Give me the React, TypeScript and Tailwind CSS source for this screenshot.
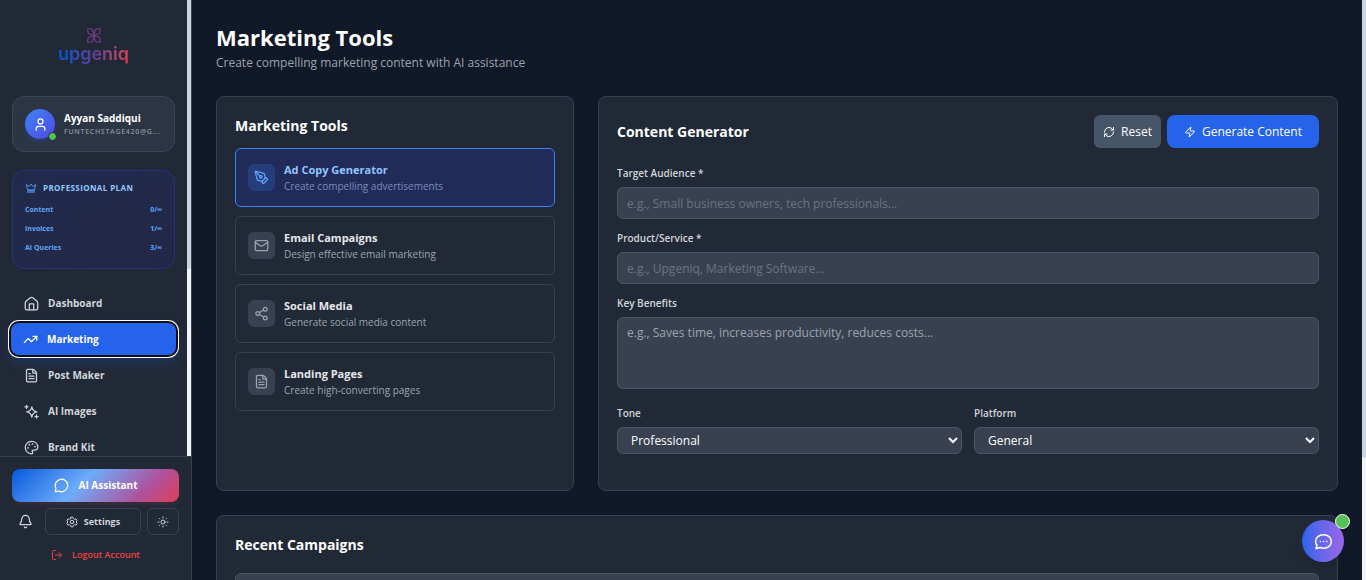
import { useState } from 'react'
import type { ReactNode } from 'react'
import {
  Bell,
  FileText,
  LogOut,
  Mail,
  MessageCircle,
  Palette,
  PenTool,
  RefreshCw,
  Share2,
  TrendingUp,
  User,
  Zap,
} from 'lucide-react'

function Icon({ className, children }: { className?: string; children: ReactNode }) {
  return (
    <svg
      viewBox="0 0 24 24"
      fill="none"
      stroke="currentColor"
      strokeWidth="2"
      strokeLinecap="round"
      strokeLinejoin="round"
      className={className}
      aria-hidden="true"
    >
      {children}
    </svg>
  )
}

function HomeIcon({ className }: { className?: string }) {
  return (
    <Icon className={className}>
      <path d="M2 11.500c0-1.800.6-2.800 2-3.900l5.500-4.500C10.500 2.300 11.200 2 12 2s1.500.3 2.500 1.100L20 7.600c1.400 1.100 2 2.100 2 3.900V19a3 3 0 0 1-3 3H5a3 3 0 0 1-3-3z" />
      <path d="M8.500 22v-9.500h7V22" />
    </Icon>
  )
}

function SparklesIcon({ className }: { className?: string }) {
  return (
    <Icon className={className}>
      <path d="M12.500 4.500c.8 5 2.500 7 8 8-5.500 1-7.200 3-8 8.500-.8-5.500-2.500-7.500-8-8.500 5.500-1 7.200-3 8-8z" />
      <path d="M4 2v5M1.500 4.500h5M20 17.500v5M17.500 20h5" />
    </Icon>
  )
}

function CrownIcon({ className }: { className?: string }) {
  return (
    <Icon className={className}>
      <path d="M5 15 2.500 5 8 9.500 12 4l4 5.500L21.500 5 19 15z" />
      <path d="M5 16h14v5H5z" fill="currentColor" opacity=".7" />
    </Icon>
  )
}

function GearIcon({ className }: { className?: string }) {
  return (
    <Icon className={className}>
      <path d="M10 2.500h4l1 2.800 2.200 1.200 3-.5 2 3.500-2 2.500 2 2.500-2 3.500-3-.5-2.200 1.200-1 2.800h-4l-1-2.800-2.200-1.200-3 .5-2-3.500 2-2.500-2-2.500 2-3.500 3 .5L9 5.300z" />
      <circle cx="12" cy="12" r="3.500" />
    </Icon>
  )
}

function SunIcon({ className }: { className?: string }) {
  return (
    <Icon className={className}>
      <circle cx="12" cy="12" r="4" />
      <path d="M12 2v2M12 20v2M2 12h2M20 12h2M5 5l.8.8M18.200 18.200l.8.8M5 19l.8-.8M18.200 5.800 19 5" />
    </Icon>
  )
}

function ChatIcon({ className }: { className?: string }) {
  return (
    <Icon className={className}>
      <path d="M12 3.500c5.500 0 10 3.700 10 8.500s-4.500 8.500-10 8.500c-1.500 0-3-.3-4.300-.8L2.500 21l1.300-4.200C2.700 15.400 2 13.800 2 12c0-4.800 4.500-8.500 10-8.500z" />
      <path d="M7.800 12h.1M12 12h.1M16.200 12h.1" />
    </Icon>
  )
}

function LogoMark() {
  return (
    <svg viewBox="0 0 28 30" className="h-[15px] w-3.5" fill="none" stroke="#753d86" strokeWidth="2.200" strokeLinejoin="round" aria-hidden="true">
      <path d="M14 15 5 12Q1.500 10.500 1.500 7V1.500H7Q12.500 2.500 12.500 8zM14 15l9-3q3.500-1.500 3.500-5V1.500H21Q15.500 2.500 15.500 8zM14 15 5 18q-3.500 1.500-3.500 5v5.500H7q5.500-1 5.500-6.500zM14 15l9 3q3.500 1.500 3.500 5v5.500H21q-5.500-1-5.500-6.500z" />
    </svg>
  )
}

const USAGE = [
  { label: 'Content', value: '0/∞' },
  { label: 'Invoices', value: '1/∞' },
  { label: 'AI Queries', value: '3/∞' },
]

const NAV = [
  { label: 'Dashboard', icon: HomeIcon },
  { label: 'Marketing', icon: TrendingUp },
  { label: 'Post Maker', icon: FileText },
  { label: 'AI Images', icon: SparklesIcon },
  { label: 'Brand Kit', icon: Palette },
]

const TOOLS = [
  { id: 'ad', title: 'Ad Copy Generator', text: 'Create compelling advertisements', icon: PenTool },
  { id: 'email', title: 'Email Campaigns', text: 'Design effective email marketing', icon: Mail },
  { id: 'social', title: 'Social Media', text: 'Generate social media content', icon: Share2 },
  { id: 'landing', title: 'Landing Pages', text: 'Create high-converting pages', icon: FileText },
]

const LABEL = 'block text-[10px] leading-4 font-semibold text-[#d1d5db]'
const FIELD =
  'block w-full rounded-md border border-[#4b5563] bg-[#394151] px-[9px] text-xs text-white focus:outline-none focus:border-[#3b82f6]'

function Sidebar() {
  return (
    <aside className="flex w-48 shrink-0 flex-col border-r border-[#374151] bg-[#212936]">
      <div className="flex min-h-0 flex-1">
        <div className="min-w-0 flex-1 overflow-hidden px-3">
          <div className="flex h-24 flex-col items-center pt-7">
            <LogoMark />
            <span className="bg-linear-to-r from-[#1053cc] from-15% via-[#5b3f9a] to-[#dc3c50] bg-clip-text font-['Inter'] text-lg leading-[22px] font-semibold text-transparent">
              upgeniq
            </span>
          </div>

          {/* Account */}
          <div className="flex h-14 items-center gap-[9px] rounded-xl border border-[#3b4452] bg-[#2c3543] px-3">
            <div className="relative flex size-[30px] shrink-0 items-center justify-center rounded-full bg-linear-to-br from-[#3b82f6] to-[#4f46e5] text-white shadow-md shadow-[#2563eb33]">
              <User className="size-[15px]" />
              <span className="absolute -right-0.5 -bottom-0.5 size-[9px] rounded-full border border-[#1f2937] bg-[#55c057]" />
            </div>
            <div className="min-w-0">
              <p className="text-[10px] leading-4 font-bold text-white">Ayyan Saddiqui</p>
              <p className="text-[7px] leading-3 font-semibold tracking-widest whitespace-nowrap text-[#8b93a1] uppercase">
                funtechstage420@g...
              </p>
            </div>
          </div>

          {/* Plan */}
          <div className="mt-[18px] h-[99px] rounded-xl border border-[#24327c] bg-linear-to-br from-[#202b4c] to-[#232747] px-3 pt-[11px] text-[7px] font-bold">
            <div className="flex items-center gap-1.5">
              <CrownIcon className="size-3 text-[#4f92e8]" />
              <h2 className="text-[8px] leading-3 tracking-wider whitespace-nowrap text-[#93c5fd] uppercase">Professional Plan</h2>
            </div>
            <dl className="mt-2.5 space-y-[7px] text-[#60a5fa]">
              {USAGE.map((item) => (
                <div key={item.label} className="flex justify-between leading-3">
                  <dt>{item.label}</dt>
                  <dd>{item.value}</dd>
                </div>
              ))}
            </dl>
          </div>

          <nav className="mt-[18px] space-y-1">
            {NAV.map(({ label, icon: NavIcon }) => (
              <a
                key={label}
                href={`#${label.toLowerCase().replace(' ', '-')}`}
                className={
                  label === 'Marketing'
                    ? '-mx-px flex h-8 items-center gap-[9px] rounded-lg bg-[#2563eb] px-3 text-[10px] font-bold text-white shadow-[0_0_0_2px_#101010,0_0_0_3px_#ffffff,0_6px_12px_2px_#2563eb33]'
                    : 'flex h-8 items-center gap-[9px] rounded-lg px-3 text-[10px] font-bold text-[#d1d5db] hover:bg-[#374151]'
                }
              >
                <NavIcon className="size-[15px]" />
                {label}
              </a>
            ))}
          </nav>
        </div>
        <div className="w-1 bg-[#f1f5f9]">
          <div className="h-[59%] rounded-b-full bg-[#cbd5e1]" />
        </div>
      </div>

      <div className="border-t border-[#374151] p-3">
        <button
          type="button"
          className="flex h-[33px] w-full items-center justify-center gap-2.5 rounded-lg bg-[linear-gradient(135deg,#0759dc_0%,#6eacfb_42%,#b0509a_78%,#dc4055_100%)] text-[10px] font-bold text-white shadow-md shadow-[#d4405022]"
        >
          <MessageCircle className="size-[15px]" />
          AI Assistant
        </button>
        <div className="mt-1.5 flex gap-1.5">
          <button type="button" aria-label="Notifications" className="flex h-[27px] w-[27px] items-center justify-center text-[#d1d5db]">
            <Bell className="size-[15px]" />
          </button>
          <button
            type="button"
            className="flex h-[27px] flex-1 items-center justify-center gap-1.5 rounded-md border border-[#374151] text-[9px] font-bold text-[#d1d5db]"
          >
            <GearIcon className="size-3" />
            Settings
          </button>
          <button
            type="button"
            aria-label="Toggle theme"
            className="flex h-[27px] w-8 items-center justify-center rounded-md border border-[#374151] text-[#d1d5db]"
          >
            <SunIcon className="size-3" />
          </button>
        </div>
        <button
          type="button"
          className="mt-1.5 flex h-[27px] w-full items-center justify-center gap-[9px] text-[9px] font-semibold text-[#ef4444]"
        >
          <LogOut className="size-3" />
          Logout Account
        </button>
      </div>
    </aside>
  )
}

function ToolPicker() {
  const [active, setActive] = useState('ad')

  return (
    <section className="rounded-lg border border-[#374151] bg-[#212936] p-[18px]">
      <h2 className="text-sm leading-[22px] font-bold text-white">Marketing Tools</h2>
      <div className="mt-[11px] space-y-[9px]">
        {TOOLS.map(({ id, title, text, icon: ToolIcon }) => (
          <button
            key={id}
            type="button"
            onClick={() => setActive(id)}
            className={
              active === id
                ? 'flex h-[59px] w-full items-center gap-[9px] rounded-md border border-[#3b82f6] bg-[#202b5a] px-3 text-left'
                : 'flex h-[59px] w-full items-center gap-[9px] rounded-md border border-[#374151] px-3 text-left'
            }
          >
            <span
              className={
                active === id
                  ? 'flex size-[27px] items-center justify-center rounded-md bg-[#253d7b] text-[#60a5fa]'
                  : 'flex size-[27px] items-center justify-center rounded-md bg-[#374151] text-[#9ca3af]'
              }
            >
              <ToolIcon className="size-[15px]" />
            </span>
            <span>
              <span
                className={
                  active === id
                    ? 'block text-[11px] leading-4 font-bold text-[#93c5fd]'
                    : 'block text-[11px] leading-4 font-bold text-[#e5e7eb]'
                }
              >
                {title}
              </span>
              <span
                className={
                  active === id ? 'block text-[10px] leading-4 text-[#7b8cba]' : 'block text-[10px] leading-4 text-[#9ca3af]'
                }
              >
                {text}
              </span>
            </span>
          </button>
        ))}
      </div>
    </section>
  )
}

function ContentGenerator() {
  return (
    <section className="col-span-2 rounded-lg border border-[#374151] bg-[#212936] px-[18px] pt-[18px] pb-9">
      <form onSubmit={(e) => e.preventDefault()}>
        <div className="flex items-center justify-between">
          <h2 className="text-sm font-bold text-white">Content Generator</h2>
          <div className="flex gap-1.5 text-xs">
            <button type="reset" className="flex h-[33px] items-center gap-1.5 rounded-md bg-[#475569] px-[9px] text-white">
              <RefreshCw className="size-3" />
              Reset
            </button>
            <button type="submit" className="flex h-[33px] items-center gap-1.5 rounded-lg bg-[#2563eb] px-[17px] text-white">
              <Zap className="size-3" />
              Generate Content
            </button>
          </div>
        </div>

        <div className="mt-[17px]">
          <label htmlFor="audience" className={LABEL}>Target Audience *</label>
          <input
            id="audience"
            placeholder="e.g., Small business owners, tech professionals..."
            className={`${FIELD} mt-1.5 h-8 placeholder:text-[#6b7280]`}
          />
        </div>
        <div className="mt-[11px]">
          <label htmlFor="product" className={LABEL}>Product/Service *</label>
          <input
            id="product"
            placeholder="e.g., Upgeniq, Marketing Software..."
            className={`${FIELD} mt-1.5 h-8 placeholder:text-[#6b7280]`}
          />
        </div>
        <div className="mt-[11px]">
          <label htmlFor="benefits" className={LABEL}>Key Benefits</label>
          <textarea
            id="benefits"
            placeholder="e.g., Saves time, increases productivity, reduces costs..."
            className={`${FIELD} mt-1.5 h-[72px] resize-none py-[7px] placeholder:text-[#9ca3af]`}
          />
        </div>
        <div className="mt-4 grid grid-cols-2 gap-3">
          <div>
            <label htmlFor="tone" className={LABEL}>Tone</label>
            <select id="tone" className={`${FIELD} mt-1.5 h-[27px]`}>
              <option>Professional</option>
              <option>Casual</option>
              <option>Friendly</option>
            </select>
          </div>
          <div>
            <label htmlFor="platform" className={LABEL}>Platform</label>
            <select id="platform" className={`${FIELD} mt-1.5 h-[27px]`}>
              <option>General</option>
              <option>Facebook</option>
              <option>Google Ads</option>
            </select>
          </div>
        </div>
      </form>
    </section>
  )
}

export default function App() {
  return (
    <div className="flex h-screen overflow-hidden bg-[#111827] font-['Open_Sans',sans-serif]">
      <Sidebar />

      <main className="min-w-0 flex-1 overflow-hidden p-6">
        <h1 className="text-[22px] leading-[26px] font-bold text-white">Marketing Tools</h1>
        <p className="mt-0.5 text-xs leading-[22px] text-[#9ca3af]">Create compelling marketing content with AI assistance</p>

        <div className="mt-[22px] grid grid-cols-3 gap-6">
          <ToolPicker />
          <ContentGenerator />
        </div>

        <section className="mt-6 rounded-lg border border-[#374151] bg-[#212936] p-[18px]">
          <h2 className="text-sm leading-[22px] font-bold text-white">Recent Campaigns</h2>
          <div className="mt-[17px] h-16 rounded-md border border-[#4b5563] bg-[#394151]" />
        </section>
      </main>

      <div className="w-1 shrink-0 bg-[#f1f5f9]">
        <div className="h-[79%] rounded-b-full bg-[#cbd5e1]" />
      </div>

      {/* Chat launcher */}
      <button
        type="button"
        aria-label="Open chat"
        className="fixed right-[22px] bottom-[18px] flex size-[42px] items-center justify-center rounded-full bg-linear-to-r from-[#2563eb] to-[#9a66e8] text-white shadow-lg"
      >
        <ChatIcon className="size-[19px]" />
        <span className="absolute -top-1.5 -right-1.5 size-[15px] rounded-full border border-white bg-[#55c057]" />
      </button>
    </div>
  )
}
